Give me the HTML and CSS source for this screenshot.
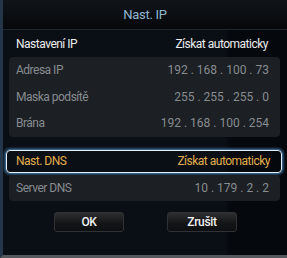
FILE: index.html
```html
<!DOCTYPE html>
<html lang="cs">
    <head>
        <meta charset="UTF-8" />
        <title>Nast. IP</title>
        <link rel="stylesheet" href="styles.css">
    </head>
    <body>
        <div class="dialog">
            <div class="title">Nast. IP</div>

            <div class="content">
                <div class="row head">
                    <span>Nastavení IP</span>
                    <span>Získat automaticky</span>
                </div>

                <div class="panel">
                    <div class="row">
                        <span>Adresa IP</span>
                        <span class="ip">192 . 168 . 100 . 73</span>
                    </div>
                    <div class="row">
                        <span>Maska podsítě</span>
                        <span class="ip">255 . 255 . 255 . 0</span>
                    </div>
                    <div class="row">
                        <span>Brána</span>
                        <span class="ip">192 . 168 . 100 . 254</span>
                    </div>
                </div>

                <div class="row focus">
                    <span>Nast. DNS</span>
                    <span>Získat automaticky</span>
                </div>

                <div class="panel single">
                    <div class="row">
                        <span>Server DNS</span>
                        <span class="ip">10 . 179 . 2 . 2</span>
                    </div>
                </div>

                <div class="buttons">
                    <button class="btn">OK</button>
                    <button class="btn">Zrušit</button>
                </div>
            </div>
        </div>
    </body>
</html>
```

FILE: styles.css
```css
body {
    margin: 0;
    width: 287px;
    height: 258px;
    overflow: hidden;
    background: #060a10;
    font-family: 'Roboto', 'Liberation Sans', sans-serif;
    font-size: 12px;
    letter-spacing: -0.5px;
}

.dialog {
    height: 255px;
    border-bottom: 3px solid #55595e;
    border-left: 3px solid #23364a;
    background: linear-gradient(to right, #0a0f16 0%, #0a0f16 78%, #05080c 80%, #05080c 100%);
    display: flex;
    flex-direction: column;
}

.title {
    height: 29px;
    line-height: 29px;
    text-align: center;
    color: #8fb6d0;
    font-size: 13px;
    letter-spacing: -0.3px;
    background: linear-gradient(#101419, #06080b);
    border-bottom: 1px solid #20262d;
}

.content {
    padding: 0 5px 0 3px;
}

.row {
    display: flex;
    justify-content: space-between;
    align-items: center;
}

.head {
    height: 27px;
    padding: 0 14px 0 10px;
    color: #ecedee;
}

.panel {
    background: #1c1f23;
    border-radius: 4px;
    margin: 0 2px 0 3px;
    color: #878c91;
}

.panel .row {
    height: 26.5px;
    padding: 0 11px 0 7px;
}

.ip {
    letter-spacing: 0;
}

.focus {
    height: 21px;
    margin-top: 13px;
    padding: 0 11px 0 9px;
    color: #e1ae4c;
    border: 1px solid #e4f0fb;
    border-radius: 4px;
    box-shadow: 0 0 3px 1px #4f8fc8;
}

.panel.single {
    margin-top: 2px;
}

.panel.single .row {
    height: 26px;
}

.buttons {
    display: flex;
    justify-content: center;
    gap: 43px;
    margin-top: 11px;
    padding-left: 3px;
}

.btn {
    width: 70px;
    height: 20px;
    border: 1px solid #2f3134;
    border-radius: 3px;
    background: linear-gradient(#2e2f31, #141516 55%, #0e0f10);
    color: #f2f2f2;
    font-family: 'Roboto', 'Liberation Sans', sans-serif;
    font-size: 12px;
    font-weight: 500;
    letter-spacing: -0.3px;
    padding: 0;
}
```
